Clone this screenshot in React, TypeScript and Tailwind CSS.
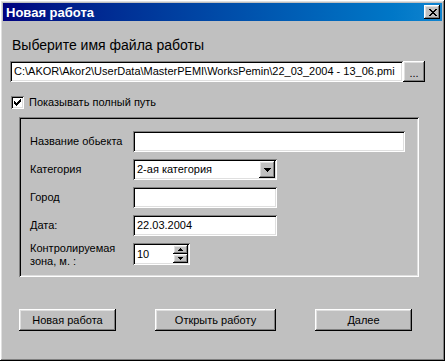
import React from 'react';

// classic 3d borders
const SUNKEN = "shadow-[inset_1px_1px_#808080,inset_-1px_-1px_#ffffff,inset_2px_2px_#000000,inset_-2px_-2px_#dfdfdf]";
const RAISED = "shadow-[inset_-1px_-1px_#000000,inset_1px_1px_#ffffff,inset_-2px_-2px_#808080,inset_2px_2px_#dfdfdf]";

function Px({ d, w, h }: { d: string; w: number; h: number }) {
  return (
    <svg width={w} height={h} viewBox={`0 0 ${w} ${h}`} shapeRendering="crispEdges" className="block">
      <path d={d} fill="#000" />
    </svg>
  );
}

const CLOSE_X = "M0 0h2v1H0z M6 0h2v1H6z M1 1h2v1H1z M5 1h2v1H5z M2 2h4v1H2z M3 3h2v1H3z M2 4h4v1H2z M1 5h2v1H1z M5 5h2v1H5z M0 6h2v1H0z M6 6h2v1H6z";
const CHECK = "M6 0h1v1H6z M5 1h2v1H5z M0 2h1v1H0z M4 2h3v1H4z M0 3h2v1H0z M3 3h3v1H3z M0 4h5v1H0z M1 5h3v1H1z M2 6h1v1H2z";
const DOWN = "M0 0h7v1H0z M1 1h5v1H1z M2 2h3v1H2z M3 3h1v1H3z";
const SPIN_UP = "M2 0h1v1H2z M1 1h3v1H1z M0 2h5v1H0z";
const SPIN_DOWN = "M0 0h5v1H0z M1 1h3v1H1z M2 2h1v1H2z";

function Field({ value = "", width }: { value?: string; width: string }) {
  return (
    <div className={`${width} h-[21px] bg-white ${SUNKEN} pl-[4px] flex items-center`}>
      <span className="leading-none">{value}</span>
    </div>
  );
}

function Row({ label, children }: { label: React.ReactNode; children: React.ReactNode }) {
  return (
    <div className="flex items-center h-[21px]">
      <div className="w-[103px]">{label}</div>
      {children}
    </div>
  );
}

export default function App() {
  return (
    <div className="w-[447px] h-[361px] bg-white font-['Liberation_Sans',Arial,sans-serif] text-[11px] text-black">
      <div className={`w-[445px] h-[361px] bg-[#c0c0c0] p-[3px] ${RAISED} flex flex-col`}>
        {/* title bar */}
        <div className="h-[18px] flex items-center justify-between pl-[3px] pr-[2px] bg-gradient-to-r from-[#000080] to-[#1084d0]">
          <span className="text-white font-bold text-[13px] leading-none">Новая работа</span>
          <div className={`w-[16px] h-[14px] bg-[#c0c0c0] ${RAISED} flex items-center justify-center pl-[1px]`}>
            <Px d={CLOSE_X} w={8} h={7} />
          </div>
        </div>

        <div className="pl-[7px] flex flex-col">
          <div className="mt-[16px] ml-[2px] text-[14px] leading-[16px]">Выберите имя файла работы</div>

          <div className="mt-[8px] flex">
            <Field width="w-[393px]" value="C:\AKOR\Akor2\UserData\MasterPEMI\WorksPemin\22_03_2004 - 13_06.pmi" />
            <div className={`w-[22px] h-[21px] ${RAISED} flex items-end justify-center pb-[3px] leading-none`}>...</div>
          </div>

          <div className="mt-[14px] ml-[1px] flex items-center gap-[5px] h-[13px]">
            <div className={`w-[13px] h-[13px] bg-white ${SUNKEN} flex items-center justify-center`}>
              <Px d={CHECK} w={7} h={7} />
            </div>
            <span>Показывать полный путь</span>
          </div>

          <div className={`mt-[8px] ml-[9px] w-[400px] h-[160px] ${SUNKEN} pl-[11px] pt-[14px] flex flex-col gap-[7px]`}>
            <Row label="Название обьекта">
              <Field width="w-[272px]" />
            </Row>
            <Row label="Категория">
              <div className={`w-[144px] h-[21px] bg-white ${SUNKEN} pl-[4px] pr-[2px] flex items-center justify-between`}>
                <span className="leading-none">2-ая категория</span>
                <div className={`w-[16px] h-[17px] bg-[#c0c0c0] ${RAISED} flex items-center justify-center`}>
                  <Px d={DOWN} w={7} h={4} />
                </div>
              </div>
            </Row>
            <Row label="Город">
              <Field width="w-[144px]" />
            </Row>
            <Row label="Дата:">
              <Field width="w-[144px]" value="22.03.2004" />
            </Row>
            <div className="flex items-start h-[22px]">
              <div className="w-[103px] leading-[13px] -mt-[1px]">
                Контролируемая
                <br />
                зона, м. :
              </div>
              <div className={`w-[57px] h-[22px] bg-white ${SUNKEN} pl-[4px] pr-[2px] py-[2px] flex items-center justify-between`}>
                <span className="leading-none">10</span>
                <div className="w-[15px] h-[18px] flex flex-col">
                  <div className={`flex-1 bg-[#c0c0c0] ${RAISED} flex items-center justify-center`}>
                    <Px d={SPIN_UP} w={5} h={3} />
                  </div>
                  <div className={`flex-1 bg-[#c0c0c0] ${RAISED} flex items-center justify-center`}>
                    <Px d={SPIN_DOWN} w={5} h={3} />
                  </div>
                </div>
              </div>
            </div>
          </div>

          <div className="mt-[32px] ml-[9px] flex gap-[39px]">
            <div className={`w-[97px] h-[22px] ${RAISED} flex items-center justify-center`}>Новая работа</div>
            <div className={`w-[121px] h-[22px] ${RAISED} flex items-center justify-center`}>Открыть работу</div>
            <div className={`w-[97px] h-[22px] ${RAISED} flex items-center justify-center`}>Далее</div>
          </div>
        </div>
      </div>
    </div>
  );
}
